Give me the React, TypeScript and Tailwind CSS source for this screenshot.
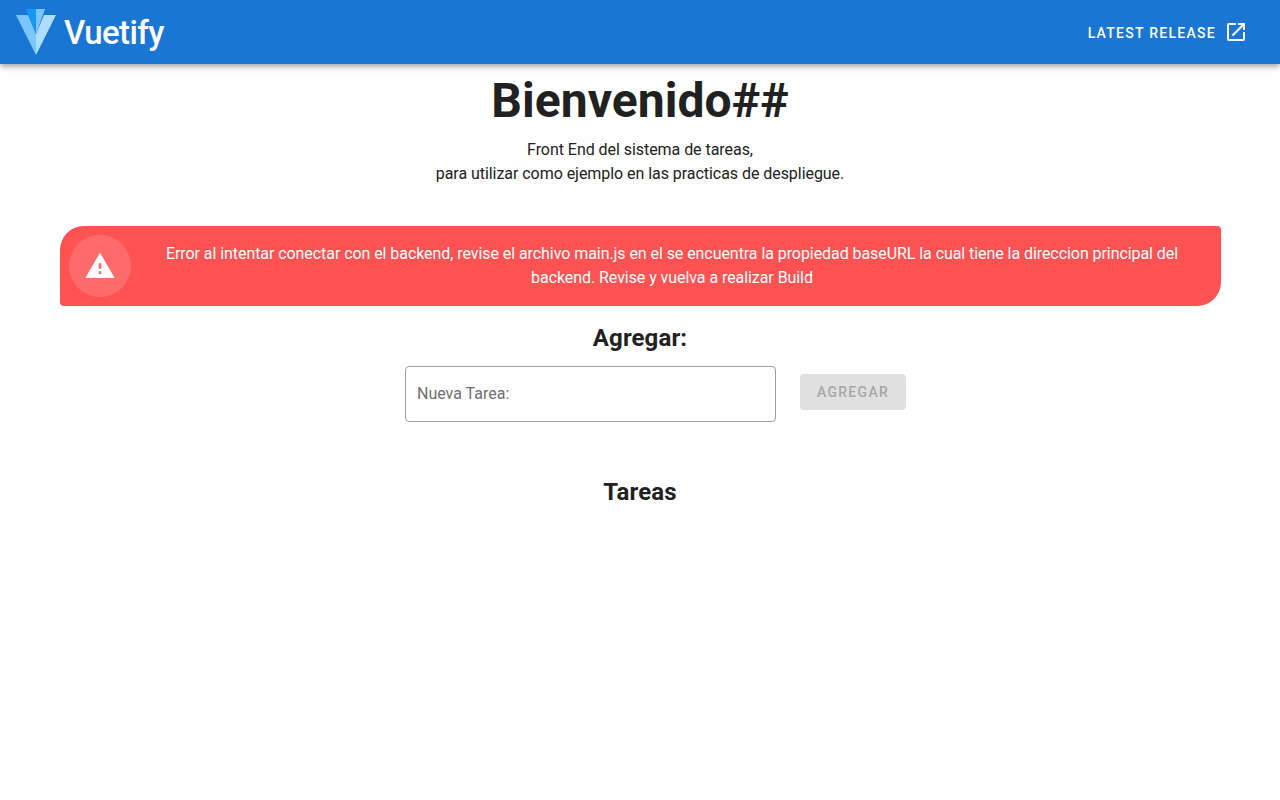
function VuetifyLogo() {
  return (
    <svg width="40" height="46" viewBox="0 0 40 46" className="shrink-0">
      <polygon points="20,46 40,6 28,6 20,25" fill="#aeddff" />
      <polygon points="20,46 0,6 12,6 20,25" fill="#7bc6ff" />
      <polygon points="10,0 20,0 20,25" fill="#1697f6" />
      <polygon points="20,0 29,0 20,25" fill="#7bc6ff" />
    </svg>
  )
}

export default function App() {
  return (
    <div className="min-h-[800px] bg-white font-['Roboto',sans-serif] text-[#212121]">
      <header className="h-16 bg-[#1976d2] shadow-[0_2px_4px_-1px_rgba(0,0,0,0.2),0_4px_5px_0_rgba(0,0,0,0.14),0_1px_10px_0_rgba(0,0,0,0.12)] flex items-center justify-between pl-4 pr-8">
        <div className="flex items-center gap-2">
          <VuetifyLogo />
          <span className="text-[33px] leading-none font-medium text-white tracking-[-0.6px]">Vuetify</span>
        </div>
        <div className="flex items-center gap-2 text-white">
          <span className="mt-px text-sm font-medium uppercase tracking-[1.27px]">Latest Release</span>
          <svg width="24" height="24" viewBox="0 0 24 24" fill="currentColor">
            <path d="M14,3V5H17.59L7.76,14.83L9.17,16.24L19,6.41V10H21V3M19,19H5V5H12V3H5C3.89,3 3,3.9 3,5V19A2,2 0 0,0 5,21H19A2,2 0 0,0 21,19V12H19V19Z" />
          </svg>
        </div>
      </header>

      <main>
        <div className="text-center pt-[5px]">
          <h1 className="text-5xl leading-[64px] font-bold tracking-[0.05px]">Bienvenido##</h1>
          <p className="mt-[5px] text-base leading-6 tracking-[-0.05px]">
            Front End del sistema de tareas,
            <br />
            para utilizar como ejemplo en las practicas de despliegue.
          </p>
        </div>

        <div className="mt-10 mx-[60px] w-[1161px] h-20 flex items-center bg-[#ff5252] text-white rounded-tl-3xl rounded-br-3xl rounded-tr rounded-bl pl-[9px]">
          <div className="w-[62px] h-[62px] rounded-full bg-white/15 flex items-center justify-center shrink-0">
            <svg width="32" height="32" viewBox="0 0 24 24" fill="currentColor">
              <path d="M13 14H11V10H13M13 18H11V16H13M1 21H23L12 2L1 21Z" />
            </svg>
          </div>
          <p className="ml-[33px] w-[1016px] text-center text-base leading-6 tracking-[-0.065px]">
            Error al intentar conectar con el backend, revise el archivo main.js en el se encuentra la propiedad baseURL la cual tiene la direccion principal del backend. Revise y vuelva a realizar Build
          </p>
        </div>

        <h2 className="mt-4 text-center text-2xl leading-8 font-bold tracking-[0.1px]">Agregar:</h2>

        <div className="mt-3 ml-[405px] flex items-start gap-6">
          <div className="w-[371px] h-14 border border-[#9e9e9e] rounded flex items-center px-[11px] text-base text-[#6f6f6f]">
            Nueva Tarea:
          </div>
          <div className="mt-2 w-[106px] h-9 rounded bg-[#e0e0e0] text-[#a6a6a6] text-sm font-medium uppercase tracking-[1.3px] flex items-center justify-center">
            Agregar
          </div>
        </div>

        <h2 className="mt-[54px] text-center text-2xl leading-8 font-bold tracking-[0.15px]">Tareas</h2>
      </main>
    </div>
  )
}
